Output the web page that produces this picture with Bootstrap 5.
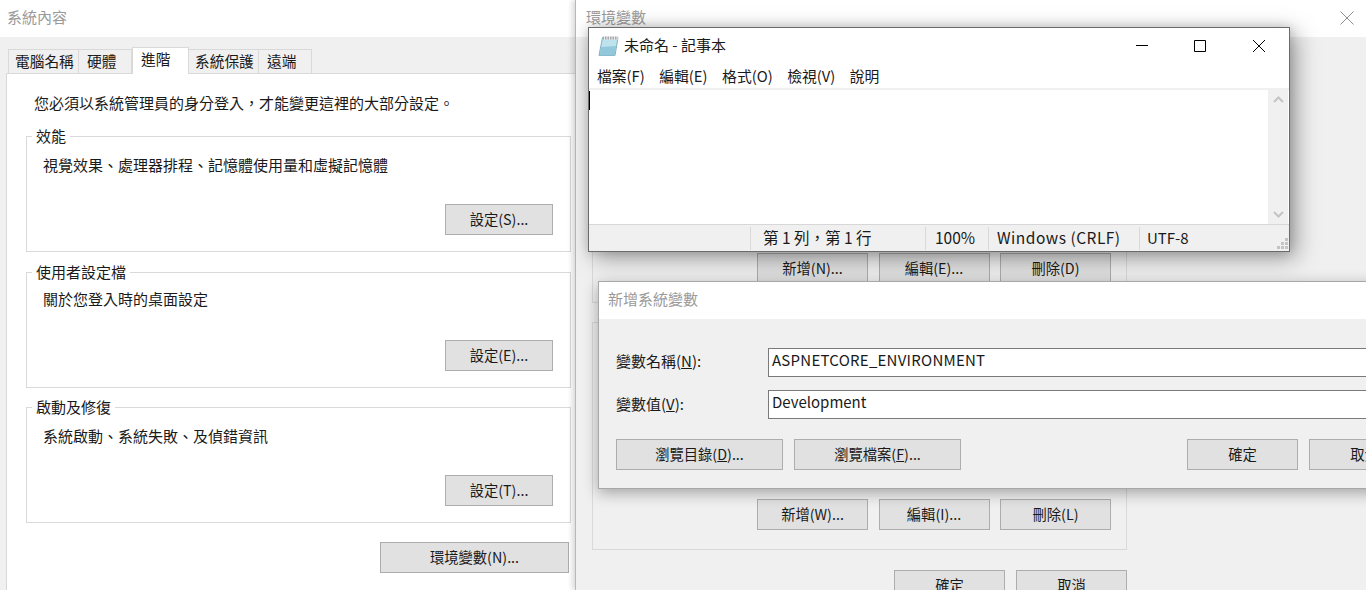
<!DOCTYPE html>
<html lang="zh-Hant">
<head>
<meta charset="utf-8">
<title>Windows</title>
<link href="https://cdn.jsdelivr.net/npm/bootstrap@5.3.0/dist/css/bootstrap.min.css" rel="stylesheet">
<style>
html,body{height:590px;overflow:hidden}
body{background:#f0f0f0;color:#1a1a1a;font-family:"Noto Sans CJK TC","Liberation Sans",sans-serif;font-size:15px;line-height:20px}
.win{position:absolute;background:#f0f0f0}
.win-sys{left:0;top:0;width:576px;height:590px}
.win-env{left:575px;top:0;width:791px;height:590px;border-left:1px solid #b8b8b8;box-shadow:-3px 0 5px rgba(0,0,0,.14)}
.win-note{left:588px;top:27px;width:702px;height:225px;background:#fff;border:1px solid #6b6b6b;box-shadow:6px 6px 22px rgba(0,0,0,.36),0 0 10px rgba(0,0,0,.16)}
.win-dlg{left:598px;top:281px;width:790px;height:208px;border:1px solid #a8a8a8;box-shadow:0 4px 14px rgba(0,0,0,.32)}
.ttl{height:37px;background:#fff;color:#9a9a9a;padding:7px 0 0 7px}
.ttl-env{padding-left:10px}
.ttl-dlg{padding-left:9px}
.tabs{height:36px;padding-left:8px}
.tabx{height:24px;background:#f0f0f0;border:1px solid #d9d9d9;border-bottom:0;border-left-width:0;padding-top:1px;font-size:14.7px;white-space:nowrap}
.tabx:first-child{border-left-width:1px}
.tabx.on{height:27px;background:#fff;border-left-width:1px;margin-bottom:-1px;padding-top:1px;position:relative;z-index:1}
.t71{width:71px;padding-left:6px}.t53{width:53px;padding-left:8px}.t57{width:57px;padding-left:8px}.t70{width:70px;padding-left:6px}.t52{width:53px;padding-left:8px}
.pane{margin-left:6px;height:517px;background:#fff;border-top:1px solid #d9d9d9;border-left:1px solid #d9d9d9;padding:19px 0 0 19px}
.hint{padding-left:8px;height:43px}
.gbox{position:relative;border:1px solid #d9d9d9;height:116px;width:545px;padding:18px 17px 16px 16px}
.gbox+.gbox{margin-top:20px}
.gbox.g2{padding-top:16px}
.gbox.g3{margin-top:19px}
.gbox h6{position:absolute;left:5px;top:-11px;margin:0;background:#fff;padding:0 4px;font-size:15px;font-weight:400;line-height:20px;color:inherit}
.wbtn{display:block;flex:none;height:31px;width:111px;background:#e1e1e1;border:1px solid #adadad;border-radius:0;padding:0 0 2px;color:#1a1a1a;font-size:14.3px;line-height:27px;text-align:center;white-space:nowrap;overflow:hidden}
.w108{width:108px}.w189{width:189px}.w167{width:167px}
.envrow{width:543px;margin-top:19px}
.closex{margin:4px 12px 0 0}
.envbody{padding:0 16px}
.ebox{border:1px solid #d9d9d9;width:535px;padding-right:15px}
.e1{height:231px;padding-top:180px;margin-top:35px}
.e2{height:228px;margin-top:19px;padding-bottom:19px}
.gap-e{gap:10.5px}
.gap-w{gap:11px}
.envfoot{width:535px;margin-top:20px}
.bar{height:37px;padding:7px 0 0 9px;background:#fff;color:#1a1a1a}
.noteicon{width:21px;height:22px;margin-right:5px;flex:none}
.ctl{width:59px;height:37px;margin-top:-7px;flex:none}
.menu{height:23px;background:#fff;padding:1px 0 0 8px;gap:14.500px;font-size:14.8px}
.client{height:136px;border-top:2px solid #f0f0f0;background:#fff;position:relative}
.caret{position:absolute;left:0;top:1px;width:1px;height:19px;background:#000}
.scroll{width:20px;margin-right:1px;background:#f0f0f0;padding:6px 0}
.stat{height:27px;background:#f0f0f0;border-top:1px solid #d7d7d7;position:relative;padding-left:161px;font-size:15.5px}
.cell{border-left:1px solid #d9d9d9;margin:2px 0 0;height:23px;padding-left:12px;white-space:nowrap;line-height:21px}
.c1{width:175px}.c2{width:63px;padding-left:9px}.c3{width:151px;padding-left:8px;letter-spacing:.5px}.c4{padding-left:7px;font-size:15px}
.grip{position:absolute;right:1px;bottom:1px}
.dlgbody{padding:29px 0 0 17px}
.lbl{width:152px;flex:none;padding-top:3px}
.lbl.lo{padding-top:4px}
.inp{height:29px;width:640px;flex:none;border:1px solid #7a7a7a;background:#fff;padding:0 3px;line-height:21px}
.wide{letter-spacing:.25px}
.frow{height:42px}
.btnrow{margin-top:7px}
.spacer{width:204px;flex:none}
.u{text-decoration:underline}
</style>
</head>
<body>
<div class="win win-sys">
  <div class="ttl">系統內容</div>
  <div class="tabs d-flex align-items-end">
    <div class="tabx t71">電腦名稱</div><div class="tabx t53">硬體</div><div class="tabx on t57">進階</div><div class="tabx t70">系統保護</div><div class="tabx t52">遠端</div>
  </div>
  <div class="pane">
    <div class="hint">您必須以系統管理員的身分登入&#xFF0C;才能變更這裡的大部分設定。</div>
    <div class="gbox d-flex flex-column justify-content-between"><h6>效能</h6><div>視覺效果、處理器排程、記憶體使用量和虛擬記憶體</div><button class="wbtn w108 align-self-end">設定(S)...</button></div>
    <div class="gbox g2 d-flex flex-column justify-content-between"><h6>使用者設定檔</h6><div>關於您登入時的桌面設定</div><button class="wbtn w108 align-self-end">設定(E)...</button></div>
    <div class="gbox g3 d-flex flex-column justify-content-between"><h6>啟動及修復</h6><div>系統啟動、系統失敗、及偵錯資訊</div><button class="wbtn w108 align-self-end">設定(T)...</button></div>
    <div class="envrow d-flex justify-content-end"><button class="wbtn w189">環境變數(N)...</button></div>
  </div>
</div>

<div class="win win-env">
  <div class="ttl ttl-env d-flex justify-content-between">環境變數
    <svg class="closex" width="14" height="14" viewBox="0 0 14 14"><path d="M.5.5l13 13M13.500.5l-13 13" stroke="#8f8f8f" fill="none"/></svg>
  </div>
  <div class="envbody">
    <div class="ebox e1 d-flex justify-content-end gap-e"><button class="wbtn">新增(N)...</button><button class="wbtn">編輯(E)...</button><button class="wbtn">刪除(D)</button></div>
    <div class="ebox e2 d-flex justify-content-end align-items-end gap-e"><button class="wbtn">新增(W)...</button><button class="wbtn">編輯(I)...</button><button class="wbtn">刪除(L)</button></div>
    <div class="envfoot d-flex justify-content-end gap-w"><button class="wbtn">確定</button><button class="wbtn">取消</button></div>
  </div>
</div>

<div class="win win-note d-flex flex-column">
  <div class="bar d-flex align-items-start">
    <svg class="noteicon" viewBox="0 0 21 22"><path d="M4.500 2.500h15.500l-3 18H1z" fill="#bfe3ee" stroke="#7fb0c2"/><path d="M3 12l15-1-1.300 9.500H1.500z" fill="#93c8da"/><path d="M5 1.500h14.500v3H5z" fill="#a8a8a8"/><path d="M6.500 1v4M9 1v4M11.500 1v4M14 1v4M16.500 1v4M19 1v4" stroke="#ececec"/></svg>
    <span class="flex-grow-1">未命名 - 記事本</span>
    <div class="ctl"><svg width="59" height="37" viewBox="0 0 59 37"><path d="M24 17.500h12" stroke="#000"/></svg></div>
    <div class="ctl"><svg width="59" height="37" viewBox="0 0 59 37"><path d="M23.500 12.500h11v11h-11z" stroke="#000" fill="none"/></svg></div>
    <div class="ctl"><svg width="59" height="37" viewBox="0 0 59 37"><path d="M23 12l12 12M35 12L23 24" stroke="#000" fill="none"/></svg></div>
  </div>
  <div class="menu d-flex align-items-start"><span>檔案(F)</span><span>編輯(E)</span><span>格式(O)</span><span>檢視(V)</span><span>說明</span></div>
  <div class="client d-flex justify-content-end"><i class="caret"></i>
    <div class="scroll d-flex flex-column justify-content-between align-items-center">
      <svg width="11" height="7" viewBox="0 0 11 7"><path d="M1 6l4.500-4.500L10 6" stroke="#c4c4c4" stroke-width="2" fill="none"/></svg>
      <svg width="11" height="7" viewBox="0 0 11 7"><path d="M1 1l4.500 4.500L10 1" stroke="#c4c4c4" stroke-width="2" fill="none"/></svg>
    </div>
  </div>
  <div class="stat d-flex">
    <div class="cell c1">第 1 列&#xFF0C;第 1 行</div>
    <div class="cell c2">100%</div>
    <div class="cell c3">Windows (CRLF)</div>
    <div class="cell c4">UTF-8</div>
    <svg class="grip" width="12" height="12" viewBox="0 0 12 12"><path d="M9 0h3v3H9zM5 4h3v3H5zM9 4h3v3H9zM1 8h3v3H1zM5 8h3v3H5zM9 8h3v3H9z" fill="#c4c4c4"/></svg>
  </div>
</div>

<div class="win win-dlg">
  <div class="ttl ttl-dlg">新增系統變數</div>
  <div class="dlgbody">
    <div class="frow d-flex"><div class="lbl">變數名稱(<span class="u">N</span>):</div><div class="inp wide">ASPNETCORE_ENVIRONMENT</div></div>
    <div class="frow d-flex"><div class="lbl lo">變數值(<span class="u">V</span>):</div><div class="inp">Development</div></div>
    <div class="btnrow d-flex gap-w"><button class="wbtn w167">瀏覽目錄(<span class="u">D</span>)...</button><button class="wbtn w167">瀏覽檔案(<span class="u">F</span>)...</button><div class="spacer"></div><button class="wbtn">確定</button><button class="wbtn">取消</button></div>
  </div>
</div>
</body>
</html>
